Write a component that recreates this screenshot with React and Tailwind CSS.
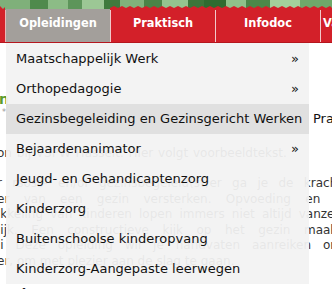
import React from "react";

const items = [
  { label: "Maatschappelijk Werk", arrow: true },
  { label: "Orthopedagogie", arrow: true },
  { label: "Gezinsbegeleiding en Gezinsgericht Werken", active: true },
  { label: "Bejaardenanimator", arrow: true },
  { label: "Jeugd- en Gehandicaptenzorg" },
  { label: "Kinderzorg" },
  { label: "Buitenschoolse kinderopvang" },
  { label: "Kinderzorg-Aangepaste leerwegen" },
];

const lines = [
  "r rsoss- en/of gezinsbegeleid(st)er ga je de kracht",
  "er van een gezin versterken. Opvoeding en o",
  "ikkeling van kinderen lopen immers niet altijd vanzelf",
  "lijk. Een constructieve kijk op het gezin maakt",
  "li Deze opleiding wil je handvaten aanreiken om",
];

function Banner() {
  return (
    <svg width="332" height="10" viewBox="0 0 332 10" className="block">
      <rect width="332" height="10" fill="#6b9f68" />
      <rect x="0" y="0" width="30" height="10" fill="#7fb07a" />
      <rect x="30" y="0" width="18" height="10" fill="#4f8a4c" />
      <rect x="48" y="0" width="20" height="10" fill="#8cbc86" />
      <rect x="68" y="0" width="14" height="10" fill="#5d955a" />
      <rect x="82" y="0" width="22" height="10" fill="#9cc795" />
      <rect x="104" y="0" width="16" height="10" fill="#3f7a3d" />
      <rect x="120" y="0" width="24" height="10" fill="#80b27b" />
      <rect x="144" y="0" width="18" height="10" fill="#4a8447" />
      <rect x="162" y="0" width="26" height="10" fill="#94c48e" />
      <rect x="188" y="0" width="16" height="10" fill="#3c763a" />
      <rect x="204" y="0" width="22" height="10" fill="#2f6b30" />
      <rect x="226" y="0" width="20" height="10" fill="#8fc28a" />
      <rect x="246" y="0" width="24" height="10" fill="#4c8849" />
      <rect x="270" y="0" width="30" height="10" fill="#a3d09b" />
      <rect x="300" y="0" width="32" height="10" fill="#6ea96a" />
      <path d="M0 10 L0 6 L3 9 L5 7 L5 10 Z" fill="#d32029" />
      <path
        d="M110 10 L110 8 L114 6 L118 8 L122 6 L126 8 L130 6 L134 8 L138 6 L142 8 L146 6 L150 8 L154 6 L158 8 L162 6 L166 8 L170 6 L174 8 L178 6 L182 8 L186 6 L190 8 L194 6 L198 8 L202 6 L206 8 L210 6 L214 8 L218 6 L222 8 L226 6 L230 8 L234 6 L238 8 L242 6 L246 8 L250 6 L254 8 L258 6 L262 8 L266 6 L270 8 L274 6 L278 8 L282 6 L286 8 L290 6 L294 8 L298 6 L302 8 L306 6 L310 8 L314 6 L318 8 L322 6 L326 8 L330 6 L332 8 L332 10 Z"
        fill="#d32029"
      />
      <path d="M6 10 L6 9 L110 9 L110 10 Z" fill="#a39f9b" />
    </svg>
  );
}

export default function App() {
  return (
    <div className="relative w-[332px] h-[289px] overflow-hidden bg-white font-['DejaVu_Sans',Verdana,sans-serif] text-[#333]">
      <Banner />
      <nav className="flex h-[33px] bg-[#d32029] border-b border-[#b5161e]">
        <div className="w-[5px] shrink-0 bg-[#d32029]" />
        <div className="w-[1px] shrink-0 bg-[#e9b6b6]" />
        <div className="w-[104px] shrink-0 bg-[#a39f9b] flex items-center justify-center pb-[4px] text-white font-bold text-[11.4px]">
          Opleidingen
        </div>
        <div className="w-[1px] shrink-0 bg-[#f1c9c9]" />
        <div className="w-[104px] shrink-0 flex items-center justify-center pb-[4px] text-white font-bold text-[11.4px]">
          Praktisch
        </div>
        <div className="w-[1px] shrink-0 bg-[#f1c9c9]" />
        <div className="w-[104px] shrink-0 flex items-center justify-center pb-[4px] text-white font-bold text-[11.4px]">
          Infodoc
        </div>
        <div className="w-[1px] shrink-0 bg-[#f1c9c9]" />
        <div className="flex-1 flex items-center pl-[2px] pb-[4px] text-white font-bold text-[11.4px] whitespace-nowrap">
          Vacatures
        </div>
      </nav>

      <main className="pt-[48px]">
        <h2 className="text-[14px] leading-[16px] font-bold text-[#5c9b2c] -ml-[1px]">n</h2>
        <div className="text-[8px] leading-[8px] text-[#999] ml-[2px] mt-[2px]">**</div>
        <p className="mt-[28px] -ml-[3px] text-[12px] leading-[16px] whitespace-nowrap [word-spacing:1px]">
          on bij VSPW Hasselt. Hier volgt voorbeeldtekst.
        </p>
        <div className="mt-[15px] -ml-[3px] w-[345px] text-[12px] leading-[15.6px]">
          {lines.map((l) => (
            <div key={l} className="whitespace-nowrap [text-align-last:justify] text-justify">
              {l}
            </div>
          ))}
          <div className="whitespace-nowrap">er, om met plezier aan de slag te gaan.</div>
        </div>
        <h3 className="mt-[14px] -ml-[1px] text-[13px] font-bold text-[#222]">ectie</h3>
      </main>

      <ul className="absolute left-[6px] top-[43px] w-[303px] pt-[1px] bg-[#f2f2f2]/[0.94] text-[13px] text-[#111]">
        {items.map((it) => (
          <li
            key={it.label}
            className={
              "h-[30px] flex items-center justify-between pl-[10px] pr-[10px] whitespace-nowrap " +
              (it.active ? "bg-[#e0e0e0]" : "")
            }
          >
            <span>{it.label}</span>
            {it.arrow ? <span>»</span> : null}
          </li>
        ))}
      </ul>

      <div className="absolute left-[309px] top-[104px] w-[40px] h-[30px] bg-white flex items-center pl-[4px] text-[13px] text-[#111] whitespace-nowrap">
        Praktijk
      </div>
    </div>
  );
}
